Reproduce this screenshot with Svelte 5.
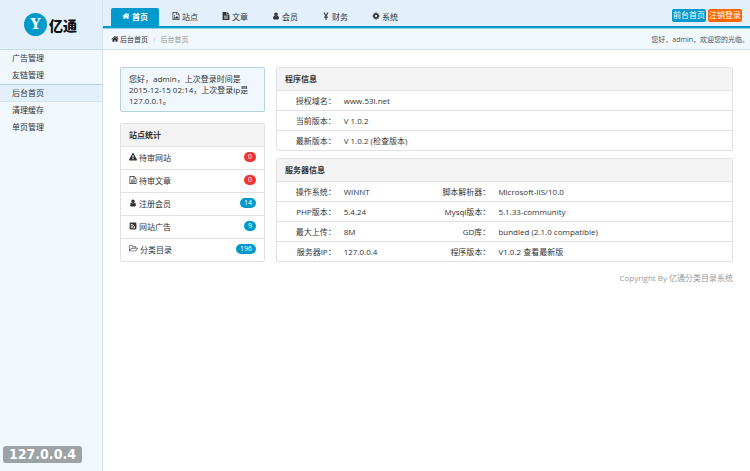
<script lang="ts">
	type Field = { label: string; value: string; link?: string };

	const icons: Record<string, string> = {
		home: 'M1472 992v480q0 26-19 45t-45 19h-384v-384h-256v384h-384q-26 0-45-19t-19-45v-480q0-1 .5-3t.5-3l575-474 575 474q1 2 1 6zm223-69l-62 74q-8 9-21 11h-3q-13 0-21-7l-692-577-692 577q-12 8-24 7-13-2-21-11l-62-74q-8-10-7-23.5t11-21.5l719-599q32-26 76-26t76 26l244 204v-195q0-14 9-23t23-9h192q14 0 23 9t9 23v408l219 182q10 8 11 21.5t-7 23.5z',
		user: 'M1536 1399q0 109-62.5 187t-150.5 78h-854q-88 0-150.5-78t-62.5-187q0-85 8.5-160.5t31.5-152 58.5-131 94-89 134.5-34.5q131 128 313 128t313-128q76 0 134.5 34.5t94 89 58.5 131 31.5 152 8.5 160.5zm-256-887q0 159-112.5 271.5t-271.5 112.5-271.5-112.5-112.5-271.5 112.5-271.5 271.5-112.5 271.5 112.5 112.5 271.5z',
		cog: 'M1152 896q0-106-75-181t-181-75-181 75-75 181 75 181 181 75 181-75 75-181zm512-109v222q0 12-8 23t-20 13l-185 28q-19 54-39 91 35 50 107 138 10 12 10 25t-9 23q-27 37-99 108t-94 71q-12 0-26-9l-138-108q-44 23-91 38-16 136-29 186-7 28-36 28h-222q-14 0-24.5-8.5t-11.5-21.5l-28-184q-49-16-90-37l-141 107q-10 9-25 9-14 0-25-11-126-114-165-168-7-10-7-23 0-12 8-23 15-21 51-66.5t54-70.5q-27-50-41-99l-183-27q-13-2-21-12.5t-8-23.5v-222q0-12 8-23t19-13l186-28q14-46 39-92-40-57-107-138-10-12-10-24 0-10 9-23 26-36 98.5-107.5t94.5-71.5q13 0 26 10l138 107q44-23 91-38 16-136 29-186 7-28 36-28h222q14 0 24.5 8.5t11.5 21.5l28 184q49 16 90 37l142-107q9-9 24-9 13 0 25 10 129 119 165 170 7 8 7 22 0 12-8 23-15 21-51 66.5t-54 70.5q26 50 41 98l183 28q13 2 21 12.5t8 23.5z',
		warning: 'M1024 1375v-190q0-14-9.5-23.5t-22.5-9.5h-192q-13 0-22.5 9.5t-9.5 23.5v190q0 14 9.5 23.5t22.5 9.5h192q13 0 22.5-9.5t9.5-23.5zm-2-374l18-459q0-12-10-19-13-11-24-11h-220q-11 0-24 11-10 7-10 21l17 457q0 10 10 16.5t24 6.5h185q14 0 23.5-6.5t10.5-16.5zm-14-934l768 1408q35 63-2 126-17 29-46.5 46t-63.5 17h-1536q-34 0-63.5-17t-46.5-46q-37-63-2-126l768-1408q17-31 47-49t65-18 65 18 47 49z',
		image: 'M128 0h1024l512 512v1280h-1536zM288 160v1472h1216v-992h-512v-480zM1152 192v320h320zM384 1472v-192l192-192 192 192 320-384 320 320v256zM576 704a140 140 0 1 0 1 0z',
		fileSolid: 'M128 0h896v640h640v1152h-1536zM1152 0l512 512h-512zM448 832v128h896v-128zM448 1088v128h896v-128zM448 1344v128h896v-128z',
		file: 'M128 0h1024l512 512v1280h-1536zM288 160v1472h1216v-992h-512v-480zM1152 192v320h320zM448 832h896v128h-896zM448 1088h896v128h-896zM448 1344h896v128h-896z',
		yen: 'M336 128h280l280 560 280-560h280l-400 740h260v140h-300v130h300v140h-300v526h-240v-526h-300v-140h300v-130h-300v-140h260z',
		rss: 'M416 128h960q288 0 288 288v960q0 288-288 288h-960q-288 0-288-288v-960q0-288 288-288zM496 1170a128 128 0 1 0 1 0zM368 760v170q450 20 480 500h170q-30-630-650-670zM368 440v170q770 30 800 820h170q-30-950-970-990z',
		folder: 'M1781 803q0-35-53-35h-1088q-40 0-85.5 21.5t-71.5 52.5l-294 363q-18 24-18 40 0 35 53 35h1088q40 0 86-22t71-53l294-363q18-22 18-39zm-1141-163h768v-160q0-40-28-68t-68-28h-576q-40 0-68-28t-28-68v-64q0-40-28-68t-68-28h-320q-40 0-68 28t-28 68v853l256-315q44-53 116-87.5t140-34.5zm1269 163q0 62-46 120l-295 363q-43 53-116 87.5t-140 34.5h-1088q-92 0-158-66t-66-158v-960q0-92 66-158t158-66h320q92 0 158 66t66 158v32h544q92 0 158 66t66 158v160h192q54 0 99 24.5t67 70.5q15 32 15 68z'
	};

	const tabs = [
		{ icon: 'home', text: '首页' },
		{ icon: 'image', text: '站点' },
		{ icon: 'fileSolid', text: '文章' },
		{ icon: 'user', text: '会员' },
		{ icon: 'yen', text: '财务' },
		{ icon: 'cog', text: '系统' }
	];

	const menu = ['广告管理', '友链管理', '后台首页', '清理缓存', '单页管理'];

	const stats = [
		{ icon: 'warning', text: '待审网站', count: 0, alert: true },
		{ icon: 'file', text: '待审文章', count: 0, alert: true },
		{ icon: 'user', text: '注册会员', count: 14, alert: false },
		{ icon: 'rss', text: '网站广告', count: 9, alert: false },
		{ icon: 'folder', text: '分类目录', count: 196, alert: false }
	];

	const programInfo: Field[][] = [
		[{ label: '授权域名', value: 'www.53l.net' }],
		[{ label: '当前版本', value: 'V 1.0.2' }],
		[{ label: '最新版本', value: 'V 1.0.2', link: '(检查版本)' }]
	];

	const serverInfo: Field[][] = [
		[
			{ label: '操作系统', value: 'WINNT' },
			{ label: '脚本解析器', value: 'Microsoft-IIS/10.0' }
		],
		[
			{ label: 'PHP版本', value: '5.4.24' },
			{ label: 'Mysql版本', value: '5.1.33-community' }
		],
		[
			{ label: '最大上传', value: '8M' },
			{ label: 'GD库', value: 'bundled (2.1.0 compatible)' }
		],
		[
			{ label: '服务器IP', value: '127.0.0.4' },
			{ label: '程序版本', value: 'V1.0.2', link: '查看最新版' }
		]
	];

	let activeTab = $state(0);
	let activeMenu = $state(2);
</script>

{#snippet icon(name: string)}
	<svg class="icon" class:wide={name === 'folder'} viewBox={name === 'folder' ? '0 0 1920 1792' : '0 0 1792 1792'} aria-hidden="true">
		<path fill-rule="evenodd" d={icons[name]} />
	</svg>
{/snippet}

{#snippet infoPanel(title: string, rows: Field[][])}
	<section class="panel">
		<h2>{title}</h2>
		<table>
			<colgroup>
				<col class="col-label" />
				<col class="col-value" />
				<col class="col-label" />
				<col />
			</colgroup>
			<tbody>
				{#each rows as row}
					<tr>
						{#each row as field}
							<th scope="row">{field.label}：</th>
							<td colspan={row.length === 1 ? 3 : 1}>
								{field.value}
								{#if field.link}<a href="#version">{field.link}</a>{/if}
							</td>
						{/each}
					</tr>
				{/each}
			</tbody>
		</table>
	</section>
{/snippet}

<div class="layout">
	<aside class="sidebar">
		<a class="logo" href="#home">
			<span class="mark">Y</span>
			<span class="brand">亿通</span>
		</a>
		<nav class="menu">
			{#each menu as item, i}
				<a href="#menu" class:active={activeMenu === i} onclick={() => (activeMenu = i)}>{item}</a>
			{/each}
		</nav>
	</aside>

	<div class="page">
		<header class="topbar">
			<nav class="tabs">
				{#each tabs as tab, i}
					<a href="#tab" class:active={activeTab === i} onclick={() => (activeTab = i)}>
						{@render icon(tab.icon)}{tab.text}
					</a>
				{/each}
			</nav>
			<div class="actions">
				<a class="btn" href="#front">前台首页</a>
				<a class="btn logout" href="#logout">注销登录</a>
			</div>
		</header>

		<div class="crumbs">
			<div class="trail">
				{@render icon('home')}
				<a href="#home">后台首页</a>
				<span class="slash">/</span>
				<span class="current">后台首页</span>
			</div>
			<span class="welcome">您好，admin，欢迎您的光临。</span>
		</div>

		<main class="content">
			<div class="left">
				<div class="notice">您好，admin，上次登录时间是2015-12-15 02:14，上次登录ip是127.0.0.1。</div>
				<section class="panel">
					<h2>站点统计</h2>
					<ul class="stats">
						{#each stats as item}
							<li>
								<span class="name">{@render icon(item.icon)}{item.text}</span>
								<span class="badge" class:alert={item.alert}>{item.count}</span>
							</li>
						{/each}
					</ul>
				</section>
			</div>

			<div class="right">
				{@render infoPanel('程序信息', programInfo)}
				{@render infoPanel('服务器信息', serverInfo)}
				<footer>Copyright By <a href="#home">亿通分类目录系统</a></footer>
			</div>
		</main>
	</div>

	<div class="host">127.0.0.4</div>
</div>

<style>
	:global(body) {
		background: #fff;
	}

	.layout {
		position: relative;
		display: grid;
		grid-template-columns: 103px 1fr;
		min-height: 100vh;
		color: #333;
		font-family: 'Open Sans', 'Noto Sans CJK SC', sans-serif;
		font-size: 8px;
		line-height: 11px;
	}

	a {
		color: inherit;
		text-decoration: none;
	}

	.icon {
		width: 8px;
		height: 8px;
		flex: none;
		fill: currentColor;
	}

	.icon.wide {
		width: 9px;
	}

	.sidebar {
		background: #f0f8fd;
		border-right: 1px solid #d3e5ef;
	}

	.logo {
		display: flex;
		align-items: center;
		gap: 2px;
		box-sizing: border-box;
		height: 50px;
		padding-left: 24px;
		background: #e3f0fb;
		border-bottom: 1px solid #c6dbe5;
	}

	.mark {
		width: 23px;
		height: 23px;
		border-radius: 50%;
		background: #0099cc;
		color: #fff;
		font: bold 14px/23px 'DejaVu Serif', serif;
		text-align: center;
	}

	.brand {
		color: #111;
		font: 900 14px/20px 'Noto Sans CJK SC', sans-serif;
	}

	.menu {
		display: flex;
		flex-direction: column;
	}

	.menu a {
		padding: 2px 12px 4px;
	}

	.menu a.active {
		background: #e3f0fb;
		border-top: 1px solid #b3d1de;
		box-shadow: inset 0 -1px #d3e5ef;
	}

	.topbar {
		display: flex;
		justify-content: space-between;
		align-items: flex-end;
		height: 26px;
		padding: 0 8px;
		background: #e3f0fb;
		border-bottom: 2px solid #0099cc;
	}

	.tabs {
		display: flex;
		gap: 2px;
	}

	.tabs a {
		display: flex;
		align-items: center;
		gap: 2px;
		height: 16px;
		padding: 0 11px 2px;
		border-radius: 2px 2px 0 0;
	}

	.tabs a.active {
		background: #0099cc;
		color: #fff;
		font-weight: bold;
	}

	.actions {
		display: flex;
		gap: 2px;
		padding-bottom: 4px;
	}

	.btn {
		padding: 0 1px 2px;
		border-radius: 2px;
		background: #0099cc;
		color: #fff;
		line-height: 11px;
	}

	.btn.logout {
		background: #ff6600;
	}

	.crumbs {
		display: flex;
		justify-content: space-between;
		align-items: center;
		height: 20px;
		padding: 0 1px 0 8px;
		background: #f0f8fd;
		border-top: 1px solid #8fd0e8;
		border-bottom: 1px solid #cfe0e8;
		font-size: 7px;
	}

	.trail {
		display: flex;
		align-items: center;
		gap: 1px;
	}

	.slash {
		padding: 0 4px;
		color: #bbb;
	}

	.current {
		color: #999;
	}

	.welcome {
		color: #555;
	}

	.content {
		display: grid;
		grid-template-columns: 145px 1fr;
		gap: 11px;
		padding: 17px;
	}

	.left,
	.right {
		display: flex;
		flex-direction: column;
	}

	.left {
		gap: 11px;
	}

	.right {
		gap: 7px;
	}

	.notice {
		padding: 5px 8px;
		border: 1px solid #b3d1de;
		border-radius: 2px;
		background: #f0f8fd;
	}

	.panel {
		border: 1px solid #e1e1e1;
		border-radius: 2px;
	}

	.panel h2 {
		margin: 0;
		padding: 5px 8px 6px;
		background: #f4f4f4;
		font-size: 8px;
		line-height: 11px;
	}

	.stats {
		margin: 0;
		padding: 0;
		list-style: none;
	}

	.stats li {
		display: flex;
		justify-content: space-between;
		align-items: center;
		height: 20px;
		padding: 0 8px 2px;
		border-top: 1px solid #e1e1e1;
	}

	.name {
		display: flex;
		align-items: center;
		gap: 2px;
	}

	.badge {
		padding: 0 4px;
		border-radius: 5px;
		background: #0099cc;
		color: #fff;
		font-size: 7px;
		line-height: 10px;
	}

	.badge.alert {
		background: #ee3333;
	}

	table {
		width: 100%;
		table-layout: fixed;
		border-collapse: collapse;
	}

	.col-label {
		width: 14%;
	}

	.col-value {
		width: 20%;
	}

	th,
	td {
		padding: 4px 3px;
		border-top: 1px solid #e1e1e1;
		font-weight: normal;
		text-align: left;
		white-space: nowrap;
	}

	th {
		padding-right: 5px;
		text-align: right;
	}

	footer {
		margin-top: 3px;
		color: #999;
		text-align: right;
	}

	.host {
		position: absolute;
		bottom: 8px;
		left: 3px;
		padding: 0 6px;
		border-radius: 3px;
		background: #9da2a5;
		color: #fff;
		font-family: 'DejaVu Sans Condensed', 'DejaVu Sans', sans-serif;
		font-size: 14px;
		font-weight: bold;
		line-height: 17px;
	}
</style>
